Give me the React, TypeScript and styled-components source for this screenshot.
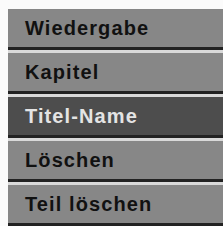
import styled, { createGlobalStyle } from 'styled-components';

const GlobalStyle = createGlobalStyle`
  html, body {
    margin: 0;
    padding: 0;
    background: #fbfbfb;
  }
`;

const Menu = styled.ul`
  list-style: none;
  margin: 0;
  padding: 9px 0 0 8px;
  display: flex;
  flex-direction: column;
  gap: 3px;
  background: #fbfbfb;
`;

const Item = styled.li<{ $active?: boolean }>`
  height: 38px;
  display: flex;
  align-items: center;
  padding-left: 17px;
  background: ${({ $active }) => ($active ? '#4d4d4d' : '#878787')};
  border-bottom: 3px solid #222;
  box-shadow: 0 3px 0 #d9d9d9;
  color: ${({ $active }) => ($active ? '#e4e4e4' : '#111')};
  font-family: 'Liberation Sans', Arial, sans-serif;
  font-weight: 700;
  font-size: 20px;
  letter-spacing: 1.1px;
  white-space: nowrap;
`;

const items = ['Wiedergabe', 'Kapitel', 'Titel-Name', 'Löschen', 'Teil löschen'];

export default function App() {
  return (
    <>
      <GlobalStyle />
      <Menu>
        {items.map((label) => (
          <Item key={label} $active={label === 'Titel-Name'}>
            {label}
          </Item>
        ))}
      </Menu>
    </>
  );
}
